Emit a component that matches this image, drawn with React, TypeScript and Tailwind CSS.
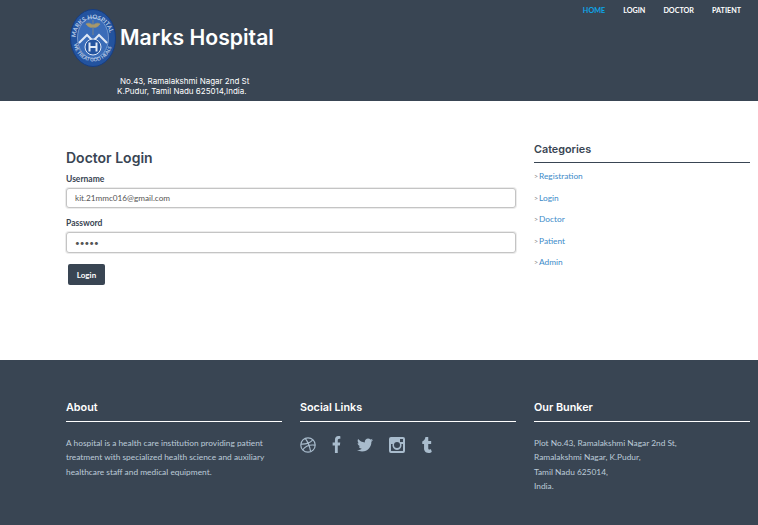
import { FaFacebookF, FaTwitter, FaTumblr } from "react-icons/fa";

const navLinks = ["HOME", "LOGIN", "DOCTOR", "PATIENT"];
const categories = ["Registration", "Login", "Doctor", "Patient", "Admin"];
const headingFont = "font-['Inter','Liberation_Sans',sans-serif]";

const Logo = () => (
  <svg width="46" height="58" viewBox="0 0 46 58" className="shrink-0">
    <defs>
      <path id="logoTop" d="M5.5 31 C5.5 3 40.5 3 40.5 31" fill="none" />
      <path id="logoBottom" d="M3.5 33 C6 59 40 59 42.5 33" fill="none" />
    </defs>
    <ellipse cx="23" cy="29" rx="22.5" ry="28.5" fill="#23539f" stroke="#173d80" />
    <ellipse cx="23" cy="29" rx="15.5" ry="20.5" fill="#3a6cb8" stroke="#bcd0ea" strokeWidth="0.5" />
    <text fontSize="6" fontWeight="700" fill="#b9cce6" fontFamily="Lato, sans-serif">
      <textPath href="#logoTop" startOffset="4%">MARKS HOSPITAL</textPath>
    </text>
    <text fontSize="5" fontWeight="700" fill="#b9cce6" fontFamily="Lato, sans-serif">
      <textPath href="#logoBottom" startOffset="3%">WE TREAT GOD HEALS</textPath>
    </text>
    <path d="M23 11v15M16 15c3-2 5 0 7 1 2-1 4-3 7-1-2 3-5 4-7 3-2 1-5 0-7-3z" fill="#a8986a" stroke="#a8986a" strokeWidth="0.6" />
    <path d="M9 34l8-8 6 6 6-6 8 8" fill="none" stroke="#dfe8f5" strokeWidth="2" />
    <circle cx="23" cy="38" r="8" fill="#23539f" stroke="#dfe8f5" />
    <path d="M19.5 33.5v9M26.5 33.5v9M19.5 38h7" stroke="#dfe8f5" strokeWidth="2" fill="none" />
  </svg>
);

const Dribbble = () => (
  <svg width="16" height="16" viewBox="0 0 16 16" fill="none" stroke="currentColor" strokeWidth="1.2">
    <circle cx="8" cy="8" r="7.2" />
    <path d="M5.2 1.4c2.4 3 4.4 7.5 5.4 13M1 7.2c4.6.2 8.8-1 11.6-4M2.6 13c2.4-3.6 6.6-5.6 12.4-4.8" />
  </svg>
);

const Instagram = () => (
  <svg width="16" height="16" viewBox="0 0 16 16">
    <path
      fillRule="evenodd"
      fill="currentColor"
      d="M2 0h12a2 2 0 0 1 2 2v12a2 2 0 0 1-2 2H2a2 2 0 0 1-2-2V2a2 2 0 0 1 2-2zM2 7v6.5a.5.5 0 0 0 .5.5h11a.5.5 0 0 0 .5-.5V7h-1.6a4.6 4.6 0 1 1-8.8 0zM11 2v3h3V2zM8 5a3 3 0 1 0 0 6 3 3 0 0 0 0-6z"
    />
  </svg>
);

const FooterHeading = ({ title }: { title: string }) => (
  <div className={`text-[10.8px] font-semibold text-white pb-[4px] border-b border-white leading-[18px] ${headingFont}`}>
    {title}
  </div>
);

const Field = ({ label, value, type, height }: { label: string; value: string; type: string; height: string }) => (
  <div className="flex flex-col">
    <label className="text-[8.5px] font-bold text-[#394553] leading-[14px] mb-[2px]">{label}</label>
    <input
      type={type}
      defaultValue={value}
      className={`w-full ${height} bg-white border border-[#c4c4c4] ring-1 ring-[#ececec] rounded-[3px] px-2 text-[8.2px] text-[#555] outline-none`}
    />
  </div>
);

export default function App() {
  return (
    <div className="w-[758px] h-[525px] flex flex-col overflow-hidden bg-white font-['Lato','Liberation_Sans',sans-serif]">
      <header className="h-[101px] shrink-0 bg-[#394553] pl-[70px] pr-[17px] flex justify-between">
        <div className="flex flex-col pt-[9px]">
          <div className="flex items-center gap-[4px]">
            <Logo />
            <span className={`mb-[1px] text-[21.2px] font-semibold text-white leading-none ${headingFont}`}>Marks Hospital</span>
          </div>
          <p className={`mt-[9px] ml-[47px] text-[8px] text-white leading-[10px] ${headingFont}`}>
            <span className="block pl-[3px]">No.43, Ramalakshmi Nagar 2nd St</span>
            <span className="block">K.Pudur, Tamil Nadu 625014,India.</span>
          </p>
        </div>
        <nav className="flex gap-[18px] pt-[5px] text-[7.2px] font-bold leading-[12px]">
          {navLinks.map((link) => (
            <a key={link} href="#" className={link === "HOME" ? "text-[#0ea5e9]" : "text-white"}>
              {link}
            </a>
          ))}
        </nav>
      </header>

      <main className="h-[259px] shrink-0 grid grid-cols-[450px_216px] gap-[18px] pl-[66px]">
        <section className="pt-[48px]">
          <h1 className={`text-[14px] font-semibold text-[#394553] leading-[18px] mb-[5px] ${headingFont}`}>Doctor Login</h1>
          <div className="flex flex-col gap-[8px]">
            <Field label="Username" value="kit.21mmc016@gmail.com" type="text" height="h-[20px]" />
            <Field label="Password" value="12345" type="password" height="h-[21px]" />
          </div>
          <button className="mt-[11px] ml-[2px] w-[37px] h-[21px] bg-[#394553] rounded-[2px] text-[8px] font-bold text-white">
            Login
          </button>
        </section>
        <aside className="pt-[41px]">
          <h2 className={`text-[10.8px] font-semibold text-[#394553] leading-[16px] pb-[4px] border-b border-[#394553] ${headingFont}`}>
            Categories
          </h2>
          <ul className="mt-[7px] flex flex-col gap-[8.5px] text-[8.3px] leading-[13px] text-[#3d8bc9]">
            {categories.map((item) => (
              <li key={item} className="flex items-center gap-[1px]">
                <span className="text-[#888] text-[7px]">&gt;</span>
                <span>{item}</span>
              </li>
            ))}
          </ul>
        </aside>
      </main>

      <footer className="flex-1 bg-[#394553] pl-[66px] pt-[39px] grid grid-cols-[216px_216px_216px] gap-[18px] content-start">
        <div>
          <FooterHeading title="About" />
          <p className="mt-[14px] text-[8.35px] leading-[14.4px] text-[#bccbd8]">
            A hospital is a health care institution providing patient treatment with specialized health science and auxiliary healthcare staff and medical equipment.
          </p>
        </div>
        <div>
          <FooterHeading title="Social Links" />
          <div className="mt-[14px] flex items-center gap-[16px] text-[#a9bccd]">
            <Dribbble />
            <FaFacebookF className="w-[9px] h-[17px]" preserveAspectRatio="none" />
            <FaTwitter className="w-[16px] h-[16px]" />
            <Instagram />
            <FaTumblr className="w-[10px] h-[16px] ml-[1px]" preserveAspectRatio="none" />
          </div>
        </div>
        <div>
          <FooterHeading title="Our Bunker" />
          <p className="mt-[14px] text-[8.35px] leading-[14.4px] text-[#bccbd8]">
            Plot No.43, Ramalakshmi Nagar 2nd St,
            <br />
            Ramalakshmi Nagar, K.Pudur,
            <br />
            Tamil Nadu 625014,
            <br />
            India.
          </p>
        </div>
      </footer>
    </div>
  );
}
